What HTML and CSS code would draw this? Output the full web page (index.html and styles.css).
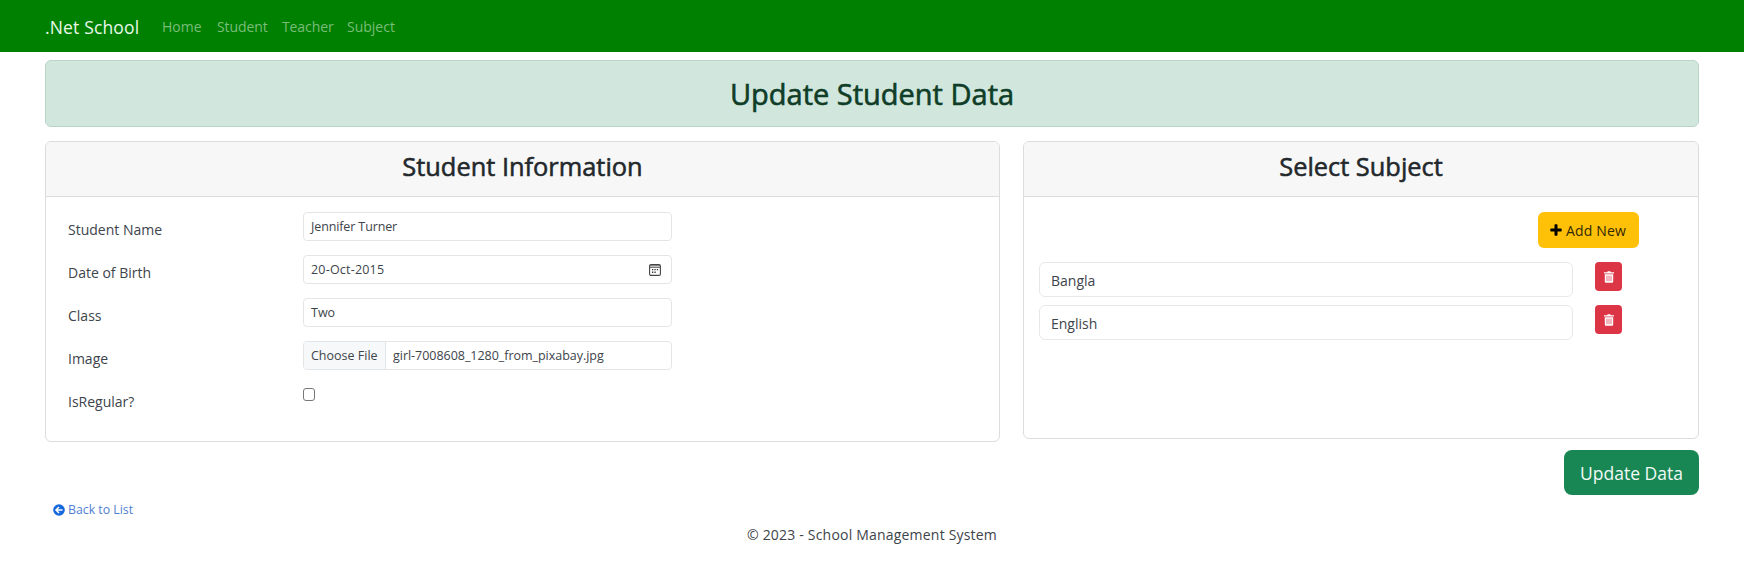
FILE: index.html
```html
<!DOCTYPE html>
<html lang="en">
<head>
<meta charset="utf-8">
<title>Update Student Data</title>
<link rel="stylesheet" href="styles.css">
</head>
<body>
<nav class="navbar">
  <a class="brand">.Net School</a>
  <a class="nav-link home">Home</a>
  <a class="nav-link student">Student</a>
  <a class="nav-link teacher">Teacher</a>
  <a class="nav-link subject">Subject</a>
</nav>
<main class="container">
  <div class="alert"><h2 class="alert-title">Update Student Data</h2></div>
  <div class="columns">
    <section class="card info-card">
      <header class="card-header"><h3 class="card-title info-title">Student Information</h3></header>
      <div class="form">
        <div class="form-row"><label class="label name-label">Student Name</label><div class="control"><span class="name-value">Jennifer Turner</span></div></div>
        <div class="form-row"><label class="label dob-label">Date of Birth</label><div class="control"><span class="dob-value">20-Oct-2015</span>
          <svg class="calendar" viewBox="0 0 12 12"><rect x=".6" y=".6" width="10.8" height="10.8" rx="1.4" fill="none" stroke="#444" stroke-width="1.1"/><path d="M.6 1.800h10.800M.6 3.400h10.800" stroke="#555" stroke-width=".9"/><path d="M5.400 5h1.300v1.300H5.400zM7.800 5h1.300v1.300H7.800zM3 5h1.300v1.300H3zM3 7.600h1.300v1.300H3zM5.400 7.600h1.300v1.300H5.400z" fill="#333"/></svg></div></div>
        <div class="form-row"><label class="label">Class</label><div class="control"><span>Two</span></div></div>
        <div class="form-row"><label class="label">Image</label><div class="control file"><span class="file-button">Choose File</span><span class="file-name">girl-7008608_1280_from_pixabay.jpg</span></div></div>
        <div class="form-row"><label class="label regular-label">IsRegular?</label><span class="checkbox"></span></div>
      </div>
    </section>
    <section class="card subject-card">
      <header class="card-header"><h3 class="card-title subject-title">Select Subject</h3></header>
      <div class="subjects">
        <button class="add"><svg class="plus" viewBox="0 0 12 12"><path d="M4.500 1q0-.7.7-.7h1.600q.7 0 .7.7v3.500H11q.7 0 .7.7v1.600q0 .7-.7.7H7.500V11q0 .7-.7.7H5.200q-.7 0-.7-.7V7.500H1q-.7 0-.7-.7V5.200q0-.7.7-.7h3.500z"/></svg><span class="add-text">Add New</span></button>
        <div class="subject-row"><div class="subject-input">Bangla</div><button class="delete"><svg class="trash" viewBox="0 0 10 12"><path fill="#fff" d="M3.200 1.300 3.700.3h2.600l.5 1H10v1.300H0V1.300zM.8 3.200h8.400V10.700q0 1.100-1.100 1.100H1.900Q.8 11.800.8 10.700z"/><path d="M3 4.600v5.600M5 4.600v5.600M7 4.600v5.600" stroke="#dc3545" stroke-width=".7"/></svg></button></div>
        <div class="subject-row"><div class="subject-input">English</div><button class="delete"><svg class="trash" viewBox="0 0 10 12"><path fill="#fff" d="M3.200 1.300 3.700.3h2.600l.5 1H10v1.300H0V1.300zM.8 3.200h8.400V10.700q0 1.100-1.100 1.100H1.900Q.8 11.800.8 10.700z"/><path d="M3 4.600v5.600M5 4.600v5.600M7 4.600v5.600" stroke="#dc3545" stroke-width=".7"/></svg></button></div>
      </div>
    </section>
  </div>
  <div class="actions"><button class="update"><span class="update-text">Update Data</span></button></div>
  <a class="back"><svg class="back-icon" viewBox="0 0 12 12"><circle cx="6" cy="6" r="5.800" fill="#1668dc"/><path d="M9.500 6H3.400M6 3 3 6l3 3" fill="none" stroke="#fff" stroke-width="1.500"/></svg><span class="back-text">Back to List</span></a>
</main>
<footer class="footer"><span class="copyright">© 2023 - School Management System</span></footer>
</body>
</html>
```
FILE: styles.css
```css
* { box-sizing: border-box; }
body { margin: 0; background: #fff; color: #3d444b; font: 14px/22px "Open Sans", "Noto Sans", sans-serif; }
h2, h3 { margin: 0; font-weight: 500; }
button { font: inherit; border: 0; padding: 0; }
span, label, a { white-space: nowrap; }
.navbar { height: 52px; background: #008000; padding: 1px 0 0 45px; display: flex; align-items: center; }
.brand { color: #e9f8e9; font-size: 17.500px; letter-spacing: .15px; margin-right: 22px; width: 95px; }
.nav-link { color: #79bd79; margin-right: 15px; }
.home { width: 40px; }
.student { width: 50px; letter-spacing: -.1px; }
.teacher { width: 50px; letter-spacing: -.1px; }
.container { padding: 8px 45px 0; }
.alert { height: 67px; background: #d1e7dd; border: 1px solid #b9d6c8; border-radius: 6px; display: flex; align-items: center; justify-content: center; }
.alert-title { color: #0f3d27; font-size: 29px; line-height: 36px; -webkit-text-stroke: .6px #0f3d27; }
.columns { display: flex; align-items: flex-start; gap: 23px; margin-top: 14px; }
.card { border: 1px solid #dcdcdc; border-radius: 6px; overflow: hidden; }
.info-card { width: 955px; height: 301px; }
.subject-card { width: 676px; height: 298px; }
.card-header { height: 55px; background: #f7f7f7; border-bottom: 1px solid #dcdcdc; display: flex; justify-content: center; padding-top: 7px; }
.card-title { color: #23282c; font-size: 25.400px; line-height: 34px; -webkit-text-stroke: .55px #23282c; }
.form { padding: 15px 22px; display: flex; flex-direction: column; gap: 14px; }
.form-row { height: 29px; display: flex; }
.label { width: 235px; padding-top: 7px; }
.control { width: 369px; height: 29px; border: 1px solid #e3e6e9; border-radius: 4px; padding: 0 8px 0 7px; display: flex; align-items: center; justify-content: space-between; font-size: 12.500px; }
.name-value { letter-spacing: -.12px; }
.dob-value { letter-spacing: .2px; }
.calendar { width: 12px; height: 12px; margin-right: 2px; }
.file { padding: 0; justify-content: flex-start; overflow: hidden; }
.file-button { width: 82px; height: 27px; padding: 3px 0 0 7px; background: #f6f8fa; border-right: 1px solid #e3e6e9; }
.file-name { margin-left: 7px; letter-spacing: -.03px; }
.checkbox { width: 12px; height: 13px; margin-top: 4px; border: 1px solid #777; border-radius: 3px; }
.subjects { padding: 15px 15px 0; display: flex; flex-direction: column; gap: 8px; }
.add { align-self: flex-end; width: 101px; height: 36px; margin: 0 44px 6px 0; border-radius: 6px; background: #ffc107; color: #302708; display: flex; align-items: center; padding-left: 12px; gap: 4px; }
.add-text { letter-spacing: .15px; padding-top: 1px; }
.plus { width: 12px; height: 12px; fill: #000; }
.subject-row { display: flex; gap: 22px; }
.subject-input { width: 534px; height: 35px; border: 1px solid #e6e8ea; border-radius: 6px; padding: 7px 11px 0; }
.delete { width: 27px; height: 29px; border-radius: 4px; background: #dc3545; display: flex; align-items: center; justify-content: center; }
.trash { width: 10px; height: 12px; }
.actions { display: flex; justify-content: flex-end; margin-top: 8px; }
.update { width: 135px; height: 45px; border-radius: 8px; background: #198754; color: #f1faf5; font-size: 17.500px; }
.back { display: flex; align-items: center; gap: 3px; margin: 4px 0 0 8px; color: #4f80d4; font-size: 12.300px; }
.back-icon { width: 12px; height: 12px; }
.footer { display: flex; justify-content: center; margin-top: 3px; }
.copyright { letter-spacing: .2px; }
```
